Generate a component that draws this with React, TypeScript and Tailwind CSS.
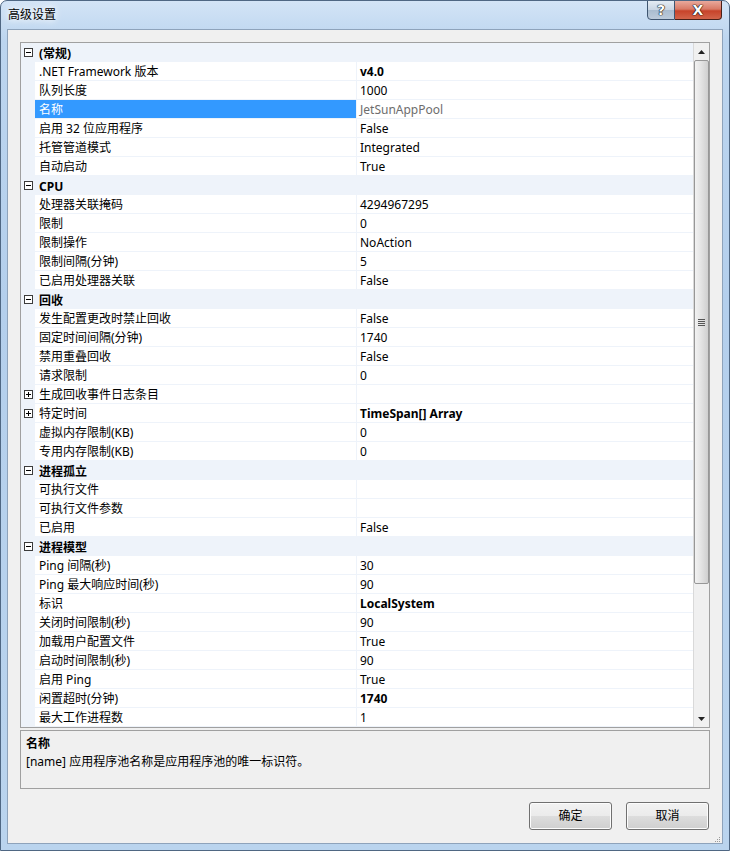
import React from 'react';

type Row = { name: string; value: string; bold?: boolean; gray?: boolean; sel?: boolean; plus?: boolean };
type Section = { title: string; rows: Row[] };

const sections: Section[] = [
  {
    title: '(常规)',
    rows: [
      { name: '.NET Framework 版本', value: 'v4.0', bold: true },
      { name: '队列长度', value: '1000' },
      { name: '名称', value: 'JetSunAppPool', gray: true, sel: true },
      { name: '启用 32 位应用程序', value: 'False' },
      { name: '托管管道模式', value: 'Integrated' },
      { name: '自动启动', value: 'True' },
    ],
  },
  {
    title: 'CPU',
    rows: [
      { name: '处理器关联掩码', value: '4294967295' },
      { name: '限制', value: '0' },
      { name: '限制操作', value: 'NoAction' },
      { name: '限制间隔(分钟)', value: '5' },
      { name: '已启用处理器关联', value: 'False' },
    ],
  },
  {
    title: '回收',
    rows: [
      { name: '发生配置更改时禁止回收', value: 'False' },
      { name: '固定时间间隔(分钟)', value: '1740' },
      { name: '禁用重叠回收', value: 'False' },
      { name: '请求限制', value: '0' },
      { name: '生成回收事件日志条目', value: '', plus: true },
      { name: '特定时间', value: 'TimeSpan[] Array', bold: true, plus: true },
      { name: '虚拟内存限制(KB)', value: '0' },
      { name: '专用内存限制(KB)', value: '0' },
    ],
  },
  {
    title: '进程孤立',
    rows: [
      { name: '可执行文件', value: '' },
      { name: '可执行文件参数', value: '' },
      { name: '已启用', value: 'False' },
    ],
  },
  {
    title: '进程模型',
    rows: [
      { name: 'Ping 间隔(秒)', value: '30' },
      { name: 'Ping 最大响应时间(秒)', value: '90' },
      { name: '标识', value: 'LocalSystem', bold: true },
      { name: '关闭时间限制(秒)', value: '90' },
      { name: '加载用户配置文件', value: 'True' },
      { name: '启动时间限制(秒)', value: '90' },
      { name: '启用 Ping', value: 'True' },
      { name: '闲置超时(分钟)', value: '1740', bold: true },
      { name: '最大工作进程数', value: '1' },
    ],
  },
];

function Expander({ plus }: { plus?: boolean }) {
  return (
    <div className="relative w-[9px] h-[9px] border border-[#3c3c3c] bg-white">
      <div className="absolute left-[1px] top-[3px] w-[5px] h-[1px] bg-black" />
      {plus && <div className="absolute left-[3px] top-[1px] w-[1px] h-[5px] bg-black" />}
    </div>
  );
}

function CategoryRow({ title }: { title: string }) {
  return (
    <div className="flex items-center h-[19px] bg-[#eef3fa]">
      <div className="w-[14px] flex justify-end pr-[2px]">
        <Expander />
      </div>
      <div className="pl-[4px] pt-[2px] font-bold text-black">{title}</div>
    </div>
  );
}

function PropRow({ r }: { r: Row }) {
  return (
    <div className="flex h-[19px] bg-[#eef3fa]">
      <div className="w-[14px] flex items-center justify-end pr-[2px] pb-[1px]">
        {r.plus && <Expander plus />}
      </div>
      <div
        className={
          r.sel
            ? 'w-[321px] h-[18px] flex items-center pl-[4px] pt-[2px] bg-[#3399ff] text-white'
            : 'w-[321px] h-[18px] flex items-center pl-[4px] pt-[2px] bg-white text-black'
        }
      >
        {r.name}
      </div>
      <div className="w-[1px]" />
      <div
        className={
          'flex-1 h-[18px] flex items-center pl-[3px] pt-[2px] bg-white ' +
          (r.gray ? 'text-[#6d6d6d]' : 'text-black') +
          (r.bold ? ' font-bold' : '')
        }
      >
        {r.value}
      </div>
    </div>
  );
}

function Scrollbar() {
  return (
    <div className="w-[16px] flex flex-col bg-[#f0f0f0] border-l border-[#d9d9d9]">
      <div className="h-[17px] flex items-center justify-center">
        <svg width="7" height="4" viewBox="0 0 7 4">
          <polygon points="0,4 7,4 3.5,0" fill="#222" />
        </svg>
      </div>
      <div className="h-[524px] rounded-[2px] border border-[#979797] bg-[linear-gradient(to_right,#f2f2f2,#e4e4e4_45%,#cfcfcf)] flex items-center justify-center">
        <div className="flex flex-col gap-[1px]">
          <div className="w-[7px] h-[1px] bg-[#555]" />
          <div className="w-[7px] h-[1px] bg-[#555]" />
          <div className="w-[7px] h-[1px] bg-[#555]" />
          <div className="w-[7px] h-[1px] bg-[#555]" />
        </div>
      </div>
      <div className="flex-1" />
      <div className="h-[17px] flex items-center justify-center">
        <svg width="7" height="4" viewBox="0 0 7 4">
          <polygon points="0,0 7,0 3.5,4" fill="#222" />
        </svg>
      </div>
    </div>
  );
}

function Btn({ label }: { label: string }) {
  return (
    <div className="w-[83px] h-[28px] rounded-[3px] border border-[#707070] bg-[linear-gradient(to_bottom,#f2f2f2,#ebebeb_50%,#dddddd_50%,#cfcfcf)] flex items-center justify-center text-black shadow-[inset_0_0_0_1px_#fcfcfc]">
      {label}
    </div>
  );
}

export default function App() {
  return (
    <div
      className="relative w-[730px] h-[851px] overflow-hidden rounded-t-[7px] border border-[#4f6783] bg-[linear-gradient(to_bottom,#d3e4f6,#bcd5ef_40px,#b4cfec_300px,#bad4ee)] text-[12px] leading-[16px]"
      style={{ fontFamily: "'Noto Sans', 'Noto Sans CJK SC', sans-serif" }}
    >
      {/* title bar */}
      <div className="relative h-[28px] flex items-center pl-[7px]">
        <span className="text-black [text-shadow:0_0_6px_#ffffff,0_0_10px_#ffffff]">高级设置</span>
        <div className="absolute top-[-1px] right-[7px] flex">
          <div className="w-[28px] h-[20px] rounded-bl-[4px] border border-[#3e5570] bg-[linear-gradient(to_bottom,#e4ebf3,#c8d5e3_50%,#a9bccf_50%,#bccbdb)] flex items-center justify-center">
            <span className="text-white font-bold text-[14px] [text-shadow:0_0_1px_#000,0_0_1px_#000,0_0_1px_#000]" style={{ fontFamily: "'DejaVu Sans', sans-serif" }}>?</span>
          </div>
          <div className="w-[47px] h-[20px] rounded-br-[4px] border border-l-0 border-[#4a2018] bg-[linear-gradient(to_bottom,#e9a99c,#d87a66_45%,#c7432a_55%,#d2644a)] flex items-center justify-center">
            <span className="text-white font-bold text-[14px] [text-shadow:0_0_1px_#000,0_0_1px_#000,0_0_1px_#000]" style={{ fontFamily: "'DejaVu Sans', sans-serif" }}>X</span>
          </div>
        </div>
      </div>

      {/* client area */}
      <div className="mx-[6px] h-[815px] border border-[#8ea3bb] bg-[#f0f0f0] px-[12px] pt-[12px] flex flex-col">
        {/* property grid */}
        <div className="h-[686px] border border-[#a0a0a0] flex bg-white">
          <div className="flex-1 flex flex-col">
            {sections.map((s) => (
              <React.Fragment key={s.title}>
                <CategoryRow title={s.title} />
                {s.rows.map((r) => (
                  <PropRow key={r.name} r={r} />
                ))}
              </React.Fragment>
            ))}
          </div>
          <Scrollbar />
        </div>

        {/* description panel */}
        <div className="mt-[2px] h-[59px] border border-[#a0a0a0] bg-[#f0f0f0] px-[5px] pt-[4px] text-black">
          <div className="font-bold leading-[18px]">名称</div>
          <div className="leading-[18px]">[name] 应用程序池名称是应用程序池的唯一标识符。</div>
        </div>

        {/* buttons */}
        <div className="mt-[13px] flex justify-end gap-[14px] pr-[1px]">
          <Btn label="确定" />
          <Btn label="取消" />
        </div>

        <div className="flex-1 relative">
          <div className="absolute right-[-10px] bottom-[1px] grid grid-cols-3 gap-[1px]">
            <div className="w-[1px] h-[1px]" />
            <div className="w-[1px] h-[1px]" />
            <div className="w-[1px] h-[1px] bg-[#9a9a9a]" />
            <div className="w-[1px] h-[1px]" />
            <div className="w-[1px] h-[1px] bg-[#9a9a9a]" />
            <div className="w-[1px] h-[1px] bg-[#9a9a9a]" />
            <div className="w-[1px] h-[1px] bg-[#9a9a9a]" />
            <div className="w-[1px] h-[1px] bg-[#9a9a9a]" />
            <div className="w-[1px] h-[1px] bg-[#9a9a9a]" />
          </div>
        </div>
      </div>
    </div>
  );
}
